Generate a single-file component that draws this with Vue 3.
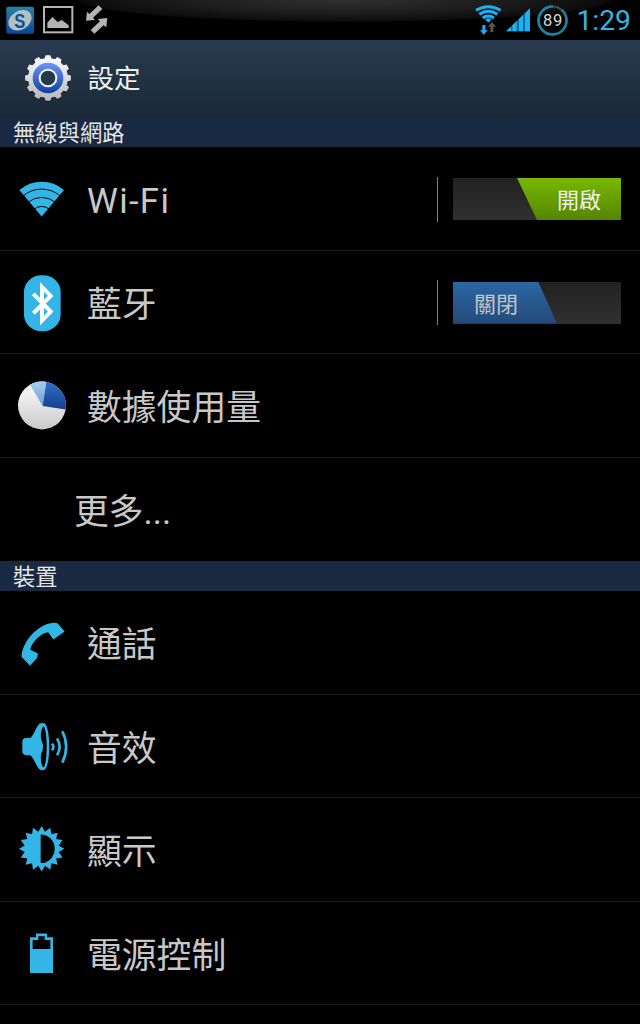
<template>
  <div class="screen">
    <div class="status-bar">
      <div class="notices">
        <svg class="notice-app" viewBox="15 15 90 90">
          <defs>
            <linearGradient id="appBlue" x1="0" y1="0" x2="0" y2="1">
              <stop offset="0" stop-color="#2484a6" />
              <stop offset="1" stop-color="#09489c" />
            </linearGradient>
          </defs>
          <rect x="19" y="20" width="83" height="81" rx="6" fill="url(#appBlue)" />
          <ellipse cx="60" cy="61" rx="37" ry="28" transform="rotate(-32 60 61)" fill="#b4bfc2" />
          <text x="43" y="83" textLength="33" lengthAdjust="spacingAndGlyphs" class="app-letter">S</text>
        </svg>
        <svg class="notice-picture" viewBox="130 15 92 90">
          <rect x="133" y="21" width="85" height="76" fill="none" stroke="#b4b4b4" stroke-width="6" />
          <path d="M143 84V68L158 51L174 66L186 60L207 76V84Z" fill="#b4b4b4" />
        </svg>
        <svg class="notice-sync" viewBox="255 15 70 90">
          <path d="M296 16L307 27L279 53L285 60L258 62L261 35L268 42Z" fill="#b4b4b4" />
          <path d="M322 54L319 82L311 76L283 101L272 90L300 64L293 57Z" fill="#b4b4b4" />
        </svg>
      </div>
      <div class="indicators">
        <svg class="signal-wifi" viewBox="45 12 81 96">
          <g fill="none" stroke="#1db0f4" stroke-width="9">
            <path d="M48 31Q85 9 122 31" />
            <path d="M58 43Q85 25 112 43" />
            <path d="M68 54Q85 42 102 54" />
          </g>
          <path d="M75 58Q85 52 95 58L85 68Z" fill="#1db0f4" />
          <path d="M67 75H76V91H83L71 104L60 91H67Z" fill="#1db0f4" />
          <path d="M91 96V80H84L96 66L108 80H100V96Z" fill="#555" />
        </svg>
        <svg class="signal-bars" viewBox="138 24 72 72">
          <path d="M138 94L210 25V94Z" fill="#0d6f9b" />
          <path d="M138 94L153 80V94ZM157 94V76L170 63V94ZM177 94V57L189 45V94ZM195 94V40L210 25V94Z" fill="#1db0f4" />
        </svg>
        <div class="battery-ring">
          <svg viewBox="0 0 93 93">
            <circle cx="46.5" cy="46.5" r="42" fill="none" stroke="#4a4a4a" stroke-width="6" />
            <circle
              cx="46.5" cy="46.5" r="42" fill="none" stroke="#1585a5" stroke-width="8"
              pathLength="100" stroke-dasharray="89 11" transform="rotate(-50 46.5 46.5)"
            />
          </svg>
          <span>89</span>
        </div>
        <span class="clock">1:29</span>
      </div>
    </div>

    <div class="title-bar">
      <svg class="gear" viewBox="72 159 144 150">
        <defs>
          <linearGradient id="gearMetal" x1="0" y1="0" x2="0" y2="1">
            <stop offset="0" stop-color="#fff" />
            <stop offset="1" stop-color="#b5b5b5" />
          </linearGradient>
          <linearGradient id="gearBlue" x1="0" y1="0" x2="0" y2="1">
            <stop offset="0" stop-color="#6f94fa" />
            <stop offset="1" stop-color="#0c43a0" />
          </linearGradient>
        </defs>
        <path :d="gearPath" transform="translate(0 3)" fill="#111820" opacity=".6" />
        <path :d="gearPath" fill="url(#gearMetal)" />
        <circle cx="144" cy="234" r="46" fill="url(#gearBlue)" />
        <circle cx="144" cy="234" r="25" fill="#26384c" stroke="#f2f2f2" stroke-width="6" />
      </svg>
      <h1>設定</h1>
    </div>

    <div v-for="section in sections" :key="section.title" class="section">
      <h2>{{ section.title }}</h2>
      <div
        v-for="item in section.items"
        :key="item.label"
        class="row"
        :class="{ 'no-icon': !item.icon }"
      >
        <svg v-if="item.icon === 'wifi'" class="icon" viewBox="54 54.75 144 180">
          <path d="M125 200L58 121Q87 96 125 96T192 121Z" fill="#33b5e5" />
          <g fill="none" stroke="#000" stroke-width="3">
            <path d="M70 138Q94 118 125 118T180 138" />
            <path d="M85 157Q102 143 125 143T165 157" />
            <path d="M103 178Q112 170 125 170T147 178" />
          </g>
        </svg>
        <svg v-else-if="item.icon === 'bluetooth'" class="icon" viewBox="54 35.25 144 180">
          <rect x="72" y="45" width="110" height="168" rx="52" ry="50" fill="#33b5e5" />
          <path d="M100 101L152 154L126 181V80L152 107L100 159" fill="none" stroke="#fff" stroke-width="12" />
        </svg>
        <svg v-else-if="item.icon === 'usage'" class="icon" viewBox="54 45.75 144 180">
          <defs>
            <linearGradient id="pieGrey" x1="0" y1="0" x2="0" y2="1">
              <stop offset="0" stop-color="#fff" />
              <stop offset="1" stop-color="#c9c9c9" />
            </linearGradient>
            <linearGradient id="pieDark" x1="0" y1="0" x2="0" y2="1">
              <stop offset="0" stop-color="#2f6fc9" />
              <stop offset="1" stop-color="#173f8c" />
            </linearGradient>
            <linearGradient id="pieLight" x1="0" y1="0" x2="0" y2="1">
              <stop offset="0" stop-color="#a5cdf0" />
              <stop offset="1" stop-color="#6c9fd6" />
            </linearGradient>
          </defs>
          <circle cx="126" cy="137" r="72" fill="url(#pieGrey)" />
          <path d="M128 139L90 75A72 72 0 0 1 139 66Z" fill="url(#pieLight)" />
          <path d="M128 139L139 66A72 72 0 0 1 197 149Z" fill="url(#pieDark)" />
        </svg>
        <svg v-else-if="item.icon === 'call'" class="icon" viewBox="54 36.75 144 180">
          <path
            d="M65 172C64 130 112 74 156 70C164 68 170 69 174 72L194 95L160 119L145 98C128 96 94 126 91 150L114 161L111 175L90 198Z"
            fill="#33b5e5"
          />
        </svg>
        <svg v-else-if="item.icon === 'sound'" class="icon" viewBox="54 347.25 144 180">
          <path d="M67 424Q67 413 78 413H91C103 403 108 380 119 370Q127 366 135 370C152 388 152 490 135 508Q127 512 119 508C108 498 103 475 91 465H78Q67 463 67 453Z" fill="#33b5e5" />
          <path d="M131 377C143 392 143 488 131 502C121 496 120 460 127 452Q131 440 127 426C120 416 121 386 131 377Z" fill="#000" />
          <g fill="none" stroke="#33b5e5" stroke-width="8">
            <path d="M156 430Q164 440 156 450" />
            <path d="M171 415Q187 440 171 465" />
            <path d="M187 393Q210 440 187 487" />
          </g>
        </svg>
        <svg v-else-if="item.icon === 'display'" class="icon" viewBox="54 57.75 144 180">
          <path :d="sunPath" fill="#33b5e5" />
          <path d="M122 104A42 43 0 0 1 122 190Z" fill="#000" />
        </svg>
        <svg v-else-if="item.icon === 'battery'" class="icon" viewBox="54 368.25 144 180">
          <path d="M90 411H108V400H141V411H159V518H90Z" fill="#33b5e5" />
          <path d="M98 419H115V408H134V419H151V446H98Z" fill="#000" />
        </svg>

        <span class="label" :class="{ latin: item.icon === 'wifi' }">{{ item.label }}</span>

        <div v-if="item.toggle" class="toggle-area">
          <div class="toggle" :class="item.toggle">
            <div class="thumb">{{ item.toggle === 'on' ? '開啟' : '關閉' }}</div>
          </div>
        </div>
      </div>
    </div>
  </div>
</template>

<script setup>
const sections = [
  {
    title: '無線與網路',
    items: [
      { label: 'Wi-Fi', icon: 'wifi', toggle: 'on' },
      { label: '藍牙', icon: 'bluetooth', toggle: 'off' },
      { label: '數據使用量', icon: 'usage' },
      { label: '更多...' }
    ]
  },
  {
    title: '裝置',
    items: [
      { label: '通話', icon: 'call' },
      { label: '音效', icon: 'sound' },
      { label: '顯示', icon: 'display' },
      { label: '電源控制', icon: 'battery' }
    ]
  }
]

// steps: [offset within one tooth (0-1), radius]
const toothed = (cx, cy, count, steps) => {
  const points = []
  for (let i = 0; i < count; i++) {
    for (const [offset, r] of steps) {
      const a = ((i + offset) / count) * Math.PI * 2 - Math.PI / 2
      points.push(`${(cx + r * Math.cos(a)).toFixed(1)} ${(cy + r * Math.sin(a)).toFixed(1)}`)
    }
  }
  return `M${points.join('L')}Z`
}

const gearPath = toothed(144, 234, 12, [[-0.2, 69], [0.2, 69], [0.32, 60], [0.68, 60]])
const sunPath = toothed(125, 147, 16, [[0, 68], [0.5, 52]])
</script>

<style>
body {
  margin: 0;
  background: #000;
}
</style>

<style scoped>
.screen {
  width: 640px;
  height: 1024px;
  overflow: hidden;
  background: #000;
  color: #c8c8c8;
  font-family: Roboto, "Noto Sans CJK TC", sans-serif;
}

.status-bar {
  display: flex;
  justify-content: space-between;
  height: 40px;
  background: radial-gradient(ellipse 270px 22px at 345px 0, #303030, #1c1c1c 60%, #0c0c0c 96%, #000 100%);
}

.notices,
.indicators {
  display: flex;
  align-items: center;
}

.notices {
  padding-left: 5px;
}

.notice-app {
  width: 30px;
  height: 30px;
}

.app-letter {
  font: bold 60px "Liberation Sans", sans-serif;
  fill: #0b4f94;
}

.notice-picture {
  width: 30.7px;
  height: 30px;
  margin-left: 8.3px;
}

.notice-sync {
  width: 23.3px;
  height: 30px;
  margin-left: 11px;
}

.indicators {
  padding-right: 9px;
}

.signal-wifi {
  width: 27px;
  height: 32px;
}

.signal-bars {
  width: 24px;
  height: 24px;
  margin-left: 4px;
}

.battery-ring {
  display: grid;
  place-items: center;
  width: 31px;
  height: 31px;
  margin-left: 7.5px;
}

.battery-ring svg,
.battery-ring span {
  grid-area: 1 / 1;
}

.battery-ring svg {
  width: 31px;
  height: 31px;
}

.battery-ring span {
  color: #d8d8d8;
  font-size: 16.5px;
  letter-spacing: 0.6px;
}

.clock {
  margin-left: 8px;
  padding-top: 2px;
  color: #33b5e5;
  font-size: 28.3px;
  line-height: 38px;
}

.title-bar {
  display: flex;
  align-items: center;
  box-sizing: border-box;
  height: 77px;
  padding-left: 24px;
  border-bottom: 1px solid #16222e;
  background: linear-gradient(to bottom, #293b51, #1a2936);
}

.gear {
  width: 48px;
  height: 50px;
}

h1 {
  margin: 0 0 0 15.5px;
  padding-top: 1px;
  color: #eee;
  font-size: 26.5px;
  font-weight: 400;
  line-height: 40px;
}

h2 {
  height: 30px;
  margin: 0;
  padding-left: 13px;
  background: #1a2942;
  color: #e6e6e6;
  font-size: 22.3px;
  font-weight: 400;
  line-height: 32px;
}

.row {
  display: flex;
  align-items: center;
  box-sizing: border-box;
  height: 103.5px;
  padding: 0 19px 0 18px;
  border-bottom: 1px solid #1b1b1b;
}

.row.no-icon {
  padding-left: 74px;
  border-bottom-color: transparent;
}

.icon {
  width: 48px;
  height: 60px;
  margin-right: 21px;
  overflow: visible;
}

.label {
  padding-top: 6px;
  font-size: 34.8px;
  line-height: 48px;
}

.label.latin {
  padding-top: 5px;
  letter-spacing: 1.3px;
}

.toggle-area {
  display: flex;
  align-items: center;
  height: 45px;
  margin: 1.5px 0 0 auto;
  padding-left: 15px;
  border-left: 1px solid #808080;
}

.toggle {
  display: flex;
  width: 168px;
  height: 42px;
  background: linear-gradient(to bottom, #222, #303030);
}

.thumb {
  box-sizing: border-box;
  width: 104px;
  height: 42px;
  padding: 1px 0 0 21px;
  background: linear-gradient(to bottom, #2b67a5, #234a78);
  clip-path: polygon(0 0, 85px 0, 104px 100%, 0 100%);
  color: #c4c4c4;
  font-size: 22px;
  line-height: 44px;
}

.toggle.on {
  justify-content: flex-end;
}

.toggle.on .thumb {
  padding-left: 40px;
  background: linear-gradient(to bottom, #78b800, #558500);
  clip-path: polygon(0 0, 100% 0, 100% 100%, 20px 100%);
  color: #eee;
}
</style>
